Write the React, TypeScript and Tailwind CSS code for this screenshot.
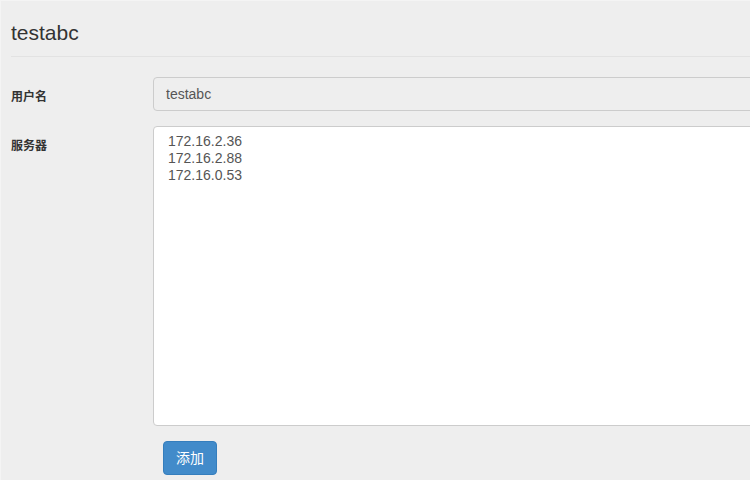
import React from 'react';

const App: React.FC = () => {
  const servers = ['172.16.2.36', '172.16.2.88', '172.16.0.53'];

  return (
    <div
      className="w-[750px] h-[480px] overflow-hidden bg-[#eeeeee] border-l border-t border-[#f4f4f4] text-[#333333]"
      style={{ fontFamily: '"Liberation Sans", "Noto Sans CJK SC", sans-serif' }}
    >
      <div className="pl-[10px] w-[800px]">
        <div className="h-[56px] pt-[20px] border-b border-[#e2e2e2]">
          <h3 className="text-[21px] leading-[24px]">testabc</h3>
        </div>

        <div className="mt-[20px] flex items-start">
          <label className="w-[142px] pt-[13px] text-[12px] leading-[14px] font-bold">用户名</label>
          <input
            readOnly
            value="testabc"
            className="w-[640px] h-[34px] px-3 rounded-l-[4px] border border-[#cccccc] bg-[#eeeeee] text-[14px] text-[#555555] outline-none"
          />
        </div>

        <div className="mt-[15px] flex items-start">
          <label className="w-[142px] pt-[13px] text-[12px] leading-[14px] font-bold">服务器</label>
          <textarea
            readOnly
            value={servers.join('\n')}
            className="w-[640px] h-[300px] pl-[14px] pr-3 pt-[6px] rounded-l-[4px] border border-[#cccccc] bg-white text-[14px] leading-[17px] text-[#555555] outline-none resize-none"
          />
        </div>

        <div className="mt-[15px] pl-[152px]">
          <button className="w-[54px] h-[34px] rounded-[4px] border border-[#357ebd] bg-[#428bca] text-white text-[14px]">
            添加
          </button>
        </div>
      </div>
    </div>
  );
};

export default App;
